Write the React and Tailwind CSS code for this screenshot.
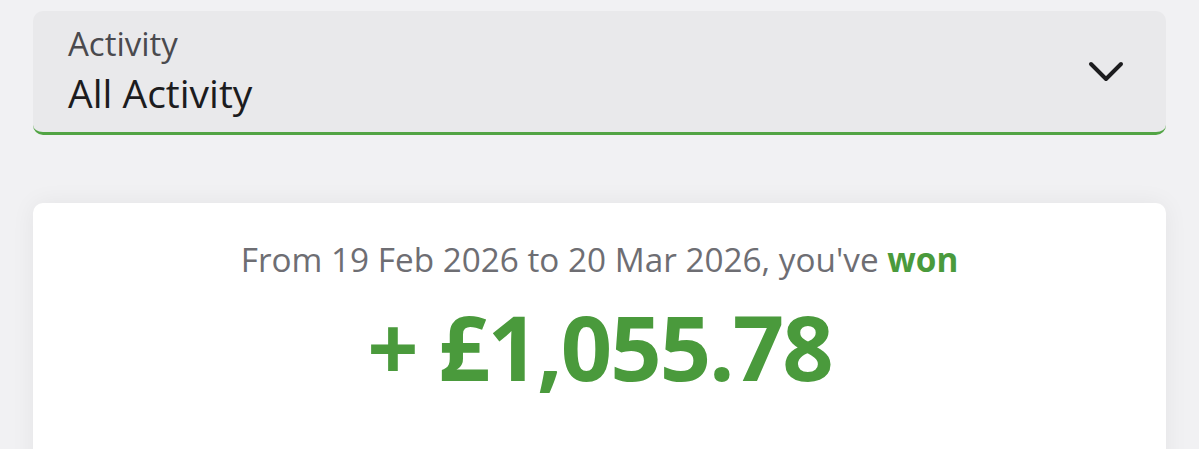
export default function App() {
  return (
    <div className="min-h-screen bg-[#f1f1f3] px-[33px] pt-[11px]" style={{ fontFamily: '"Open Sans", sans-serif' }}>
      <div className="flex h-[124px] items-center justify-between rounded-[10px] border-b-[3px] border-[#52a444] bg-[#e9e9eb] pl-[35px] pr-[42px]">
        <div className="flex flex-col gap-[8px] pt-[1px]">
          <span className="text-[33px] leading-[34px] text-[#4a4a4e]">Activity</span>
          <span className="text-[39px] leading-[48px] text-[#1c1c1e]">All Activity</span>
        </div>
        <svg width="36" height="24" viewBox="0 0 36 24" fill="none">
          <path d="M3 4 L18 19 L33 4" stroke="#1c1c1e" strokeWidth="4" strokeLinecap="round" strokeLinejoin="round" />
        </svg>
      </div>
      <div className="mt-[68px] h-[300px] rounded-[10px] bg-white pt-[34px] text-center shadow-[0_0_24px_rgba(0,0,0,0.06)]">
        <p className="text-[33.3px] leading-[44px] text-[#6e6e73]">
          From 19 Feb 2026 to 20 Mar 2026, you've <span className="font-bold text-[#4a9a3c]">won</span>
        </p>
        <p className="mt-[10px] text-[90px] font-bold leading-[110px] tracking-[-2px] text-[#4a9a3c]">+ £1,055.78</p>
      </div>
    </div>
  )
}
